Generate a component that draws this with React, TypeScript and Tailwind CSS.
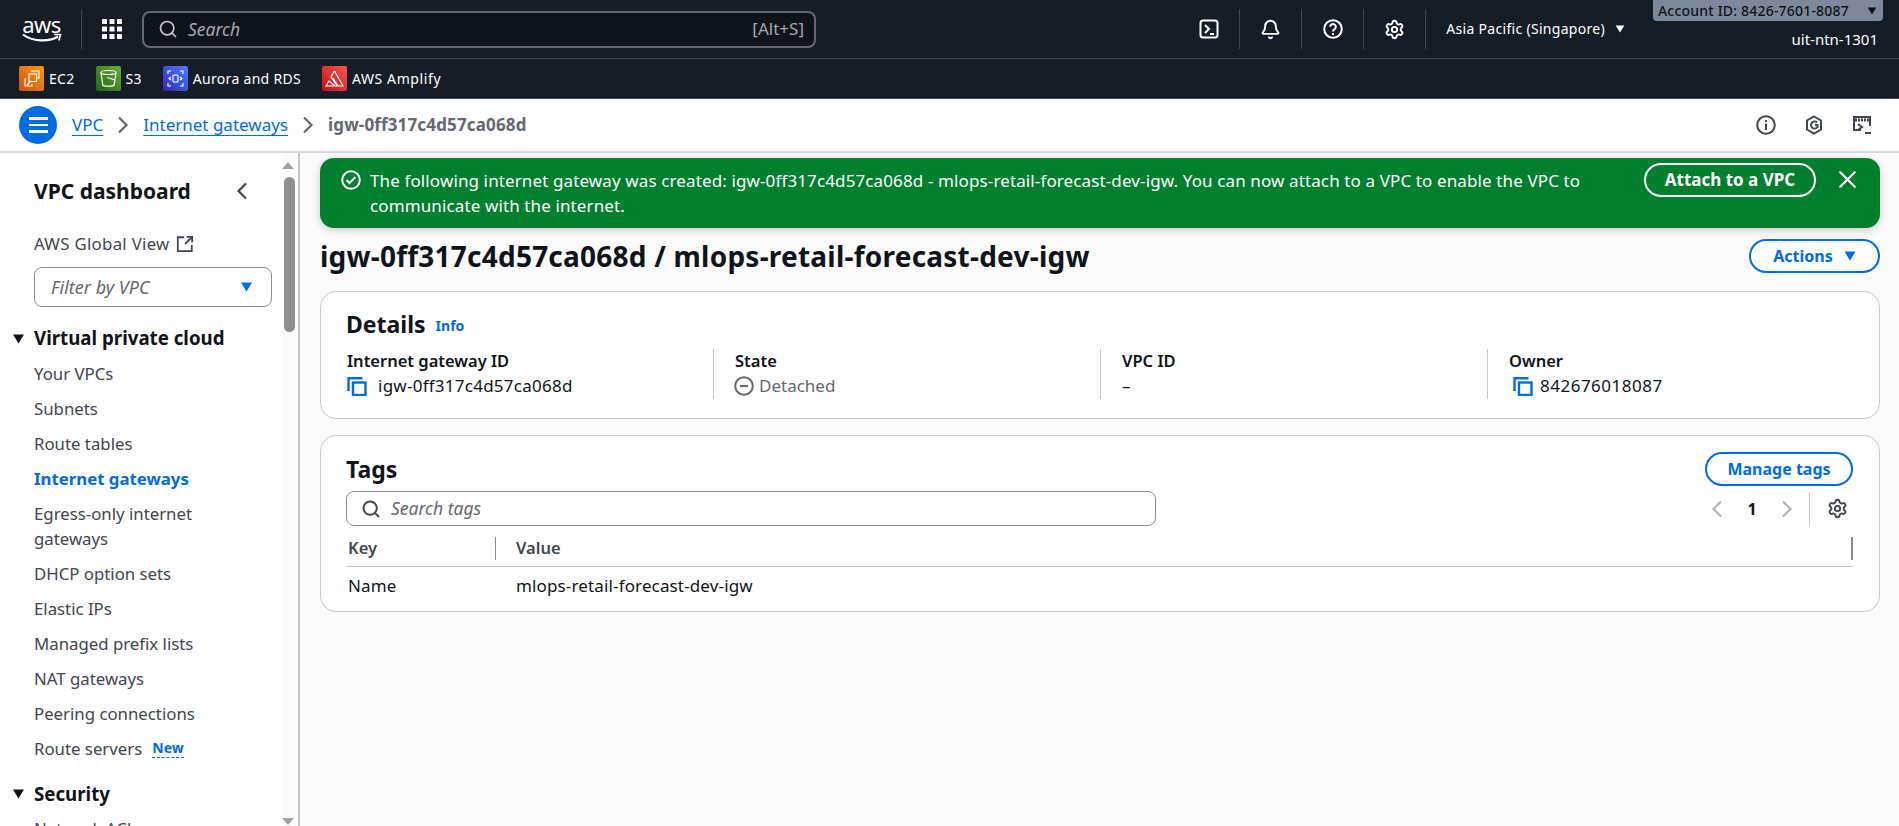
import React from 'react';
import { Bell, Search, Settings, X } from 'lucide-react';

const navItems = [
  { label: 'Your VPCs' },
  { label: 'Subnets' },
  { label: 'Route tables' },
  { label: 'Internet gateways', active: true },
  { label: 'Egress-only internet gateways' },
  { label: 'DHCP option sets' },
  { label: 'Elastic IPs' },
  { label: 'Managed prefix lists' },
  { label: 'NAT gateways' },
  { label: 'Peering connections' },
];

const Caret = ({ className }: { className: string }) => (
  <svg viewBox="0 0 12 10" className={className} fill="currentColor">
    <path d="M0.5 0.5h11L6 9.5z" />
  </svg>
);

const Chev = ({ left, className }: { left?: boolean; className: string }) => (
  <svg viewBox="0 0 12 18" className={`w-3 h-[18px] shrink-0 ${className}`} fill="none" stroke="currentColor" strokeWidth="2.2">
    <path d={left ? 'M10 1.5L2.5 9l7.5 7.5' : 'M2 1.5L9.5 9 2 16.5'} />
  </svg>
);

const CopyIcon = () => (
  <svg viewBox="0 0 20 20" className="w-5 h-5 text-[#006ce0] shrink-0" fill="none" stroke="currentColor" strokeWidth="2.4">
    <path d="M1.5 15V2.2h14" />
    <rect x="6" y="6.5" width="12.5" height="12.5" />
  </svg>
);

const Divider = () => <div className="w-px h-10 bg-[#424650]" />;

const ServiceLink = ({ label, from, to, wide, children }: { label: string; from: string; to: string; wide?: boolean; children: React.ReactNode }) => (
  <div className="flex items-center gap-[5px]">
    <div className={`w-[25px] h-[25px] rounded-[2px] bg-linear-to-tr ${from} ${to}`}>
      <svg viewBox="0 0 25 25" className="w-[25px] h-[25px]" fill="none" stroke="#fff" strokeWidth="1.1">
        {children}
      </svg>
    </div>
    <span className={`text-sm text-white ${wide ? 'tracking-[0.6px]' : 'tracking-[0.3px]'}`}>{label}</span>
  </div>
);

const TopBar = () => (
  <header className="h-[59px] shrink-0 bg-[#161d26] border-b border-[#424650] flex items-center relative">
    <div className="w-[81px] flex flex-col items-center pl-[2px] shrink-0">
      <span className="text-[22px] leading-[18px] text-white tracking-[-0.5px]">aws</span>
      <svg viewBox="0 0 40 10" className="w-10 h-[10px]" fill="none">
        <path d="M1 1.5C10 8.5 27 9.5 36 3.5" stroke="#fff" strokeWidth="2.2" />
        <path d="M32 1.5h6.5l-1.5 6" stroke="#fff" strokeWidth="1.6" />
      </svg>
    </div>
    <Divider />
    <svg viewBox="0 0 20 20" className="w-5 h-5 ml-5 shrink-0" fill="#fff">
      {[0, 7.5, 15].map((y) =>
        [0, 7.5, 15].map((x) => <rect key={`${x}-${y}`} x={x} y={y} width="5" height="5" rx="0.6" />),
      )}
    </svg>
    <div className="ml-5 w-[674px] h-[37px] shrink-0 rounded-lg border-2 border-[#656871] bg-[#0f141a] flex items-center pl-[14px] pr-[10px]">
      <Search className="w-[20px] h-[20px] text-[#c6c6cd]" strokeWidth={2} />
      <span className="ml-[10px] text-[17.5px] italic text-[#a4a7ae]">Search</span>
      <span className="ml-auto text-[17px] text-[#a4a7ae]">[Alt+S]</span>
    </div>
    <div className="ml-auto flex items-center h-10">
      <div className="w-[60px] flex justify-center">
        <svg viewBox="0 0 20 20" className="w-5 h-5" fill="none" stroke="#fff" strokeWidth="2">
          <rect x="1.5" y="1.5" width="17" height="17" rx="2.5" />
          <path d="M6 6l4 4-4 4M11 15h4" />
        </svg>
      </div>
      <div className="w-px h-10 bg-[#424650]" />
      <div className="w-[61px] flex justify-center">
        <Bell className="w-[21px] h-[21px] text-white" strokeWidth={2.2} />
      </div>
      <div className="w-px h-10 bg-[#424650]" />
      <div className="w-[61px] flex justify-center">
        <svg viewBox="0 0 20 20" className="w-5 h-5" fill="none" stroke="#fff" strokeWidth="2">
          <circle cx="10" cy="10" r="8.8" />
          <path d="M7.2 7.8a2.8 2.8 0 1 1 4.4 2.3c-1 .7-1.6 1.2-1.6 2.5" />
          <path d="M10 14.2v1.8" />
        </svg>
      </div>
      <div className="w-px h-10 bg-[#424650]" />
      <div className="w-[61px] flex justify-center">
        <Settings className="w-[21px] h-[21px] text-white" strokeWidth={2.2} />
      </div>
      <div className="w-px h-10 bg-[#424650]" />
      <span className="ml-5 text-sm tracking-[0.3px] text-white">Asia Pacific (Singapore)</span>
      <Caret className="w-[10px] h-2 ml-[10px] text-white" />
      <div className="w-[28px]" />
      <div className="w-[230px] flex flex-col items-end">
        <span className="text-[15px] text-white pr-[5px] mt-[21px]">uit-ntn-1301</span>
      </div>
      <div className="w-4" />
    </div>
    <div className="absolute top-0 right-4 w-[230px] h-[21px] rounded-b-[4px] bg-[#7d8998] flex items-center justify-between pl-[5px] pr-[6px]">
      <span className="text-sm font-medium tracking-[0.2px] text-[#0f141a] whitespace-nowrap">Account ID: 8426-7601-8087</span>
      <Caret className="w-[10px] h-2 text-[#0f141a]" />
    </div>
  </header>
);

const ServicesBar = () => (
  <div className="h-10 shrink-0 bg-[#161d26] border-b border-[#424650] flex items-center pl-[19px] gap-[21px]">
    <ServiceLink label="EC2" from="from-[#c8511b]" to="to-[#ff9900]">
      <rect x="10" y="8" width="7.5" height="7.5" />
      <path d="M13 6V5h7v7h-2M7 13H6v7h7v-2" />
      <path d="M8 19l3-3" />
    </ServiceLink>
    <ServiceLink label="S3" from="from-[#1b660f]" to="to-[#6cae3e]">
      <ellipse cx="12.5" cy="6.5" rx="7.5" ry="2" />
      <path d="M5 6.5l1.8 12.5c.5 1.5 10.9 1.5 11.4 0L20 6.5" />
      <path d="M11 11.5l8 2.5" />
    </ServiceLink>
    <ServiceLink label="Aurora and RDS" from="from-[#2e27ad]" to="to-[#527fff]">
      <rect x="10" y="9" width="5" height="7" rx="1" />
      <path d="M5 8V5h3M17 5h3v3M20 17v3h-3M8 20H5v-3M8 11l-2 1.5L8 14M17 11l2 1.5-2 1.5" />
    </ServiceLink>
    <ServiceLink label="AWS Amplify" from="from-[#bd0816]" to="to-[#ff5252]" wide>
      <path d="M12.5 5L21 20H4l3-5 6 5M12.5 5L9 11l6 9M16 20l-5-8" />
    </ServiceLink>
  </div>
);

const Breadcrumbs = () => (
  <div className="h-[54px] shrink-0 bg-white border-b-2 border-[#d5d6dc] flex items-center pl-[19px] pr-[27px]">
    <div className="w-[38px] h-[38px] rounded-full bg-[#006ce0] flex flex-col items-center justify-center gap-[4px]">
      <div className="w-[19px] h-[2.5px] bg-white" />
      <div className="w-[19px] h-[2.5px] bg-white" />
      <div className="w-[19px] h-[2.5px] bg-white" />
    </div>
    <a className="ml-[15px] text-[17px] text-[#006ce0] underline underline-offset-4">VPC</a>
    <Chev className="mx-[14px] text-[#656871]" />
    <a className="text-[17px] text-[#006ce0] underline underline-offset-4">Internet gateways</a>
    <Chev className="mx-[14px] text-[#656871]" />
    <span className="text-[17px] tracking-[0.15px] font-bold text-[#656871]">igw-0ff317c4d57ca068d</span>
    <div className="ml-auto flex items-center gap-[28px]">
      <svg viewBox="0 0 20 20" className="w-5 h-5" fill="none" stroke="#424650" strokeWidth="2">
        <circle cx="10" cy="10" r="8.8" />
        <path d="M10 8.5V15M10 5v2" />
      </svg>
      <svg viewBox="0 0 20 20" className="w-5 h-5" fill="none" stroke="#424650" strokeWidth="2">
        <path d="M10 1.5l7 4v9l-7 4-7-4v-9z" />
        <path d="M13 7.5a3.5 3.5 0 1 0 0 5M11 10h2.5v3" />
      </svg>
      <svg viewBox="0 0 20 20" className="w-5 h-5" fill="none" stroke="#424650" strokeWidth="2">
        <path d="M9 15H2V2h16v9" />
        <path d="M3 5h14" strokeWidth="3" strokeDasharray="2 1" />
        <path d="M6 9l4 3-4 3M13 18h6" />
      </svg>
    </div>
  </div>
);

const Sidebar = () => (
  <aside className="relative w-[300px] shrink-0 bg-white border-r-2 border-[#c6c6cd] overflow-hidden pl-[34px] pr-[26px] pt-[23px]">
    <div className="flex items-center justify-between pr-[24px] h-[30px]">
      <h2 className="text-[21px] leading-[30px] font-bold text-[#0f141a]">VPC dashboard</h2>
      <Chev left className="text-[#424650]" />
    </div>
    <div className="mt-[26px] h-6 flex items-center gap-[6px] text-[16.8px] tracking-[0.3px] text-[#424650]">
      <span>AWS Global View</span>
      <svg viewBox="0 0 20 20" className="w-[18px] h-[18px]" fill="none" stroke="#424650" strokeWidth="2">
        <path d="M9 2.5H2V18h15.5v-7M12 2h6v6M18 2l-8 8" />
      </svg>
    </div>
    <div className="mt-[11px] h-[40px] rounded-lg border border-[#8c8c94] flex items-center justify-between pl-4 pr-[18px]">
      <span className="text-[18px] italic text-[#656871]">Filter by VPC</span>
      <Caret className="w-[13px] h-[10px] text-[#006ce0]" />
    </div>
    <div className="relative mt-[17px] h-[28px] flex items-center">
      <Caret className="absolute -left-[22px] top-[10px] w-[13px] h-[10px] text-[#0f141a]" />
      <h3 className="text-[18.7px] font-bold text-[#0f141a]">Virtual private cloud</h3>
    </div>
    <ul className="mt-[9px] pr-[25px] flex flex-col gap-[10px]">
      {navItems.map((item) => (
        <li
          key={item.label}
          className={`text-[16.8px] leading-[25px] ${item.active ? 'font-bold text-[#006ce0]' : 'text-[#424650]'}`}
        >
          {item.label}
        </li>
      ))}
      <li className="text-[16.8px] leading-[25px] text-[#424650] flex items-center gap-[10px]">
        Route servers
        <span className="text-sm font-bold leading-[18px] text-[#006ce0] border-b border-dashed border-[#006ce0]">New</span>
      </li>
    </ul>
    <div className="relative mt-[19px] h-[28px] flex items-center">
      <Caret className="absolute -left-[22px] top-[9px] w-[13px] h-[10px] text-[#0f141a]" />
      <h3 className="text-[18.7px] font-bold text-[#0f141a]">Security</h3>
    </div>
    <div className="mt-[8px] text-[16.8px] leading-[25px] text-[#424650]">Network ACLs</div>

    {/* scrollbar */}
    <div className="absolute top-0 right-0 bottom-0 w-[15px] bg-[#fbfbfb]" />
    <div className="absolute top-[9px] right-[4px] border-x-[6px] border-x-transparent border-b-[7px] border-b-[#a3a3a3]" />
    <div className="absolute top-[24px] right-[3px] w-[11px] h-[155px] rounded-md bg-[#8f8f8f]" />
    <div className="absolute bottom-[1px] right-[4px] border-x-[6px] border-x-transparent border-t-[7px] border-t-[#a3a3a3]" />
  </aside>
);

const Banner = () => (
  <div className="h-[70px] rounded-[14px] bg-[#00802f] shadow-[0_2px_8px_rgba(0,0,0,0.2)] flex pl-[21px] pr-[18px] pt-[10px] text-white">
    <svg viewBox="0 0 20 20" className="w-[20px] h-[20px] mt-[2px] shrink-0" fill="none" stroke="#fff" strokeWidth="2">
      <circle cx="10" cy="10" r="8.8" />
      <path d="M5.5 10l3 3 6-6" />
    </svg>
    <p className="ml-[9px] w-[1225px] text-[17px] tracking-[0.12px] leading-[25px]">
      The following internet gateway was created: igw-0ff317c4d57ca068d - mlops-retail-forecast-dev-igw. You can now attach to a VPC to enable the VPC to communicate with the internet.
    </p>
    <div className="ml-auto flex items-start gap-[17px] -mt-[5px]">
      <div className="h-[34px] w-[172px] rounded-full border-2 border-white flex items-center justify-center text-[17px] font-bold">
        Attach to a VPC
      </div>
      <X className="w-[29px] h-[29px] mt-[2px]" strokeWidth={1.8} />
    </div>
  </div>
);

const DetailCol = ({ label, first, children }: { label: string; first?: boolean; children: React.ReactNode }) => (
  <div className={`h-[50px] pl-[21px] ${first ? '' : 'border-l border-[#c6c6cd]'}`}>
    <div className="text-[16.5px] leading-[24px] font-semibold text-[#0f141a]">{label}</div>
    <div className="flex items-center h-[25px] text-[17px] text-[#424650]">{children}</div>
  </div>
);

const Main = () => (
  <main className="flex-1 min-w-0 bg-[#fbfbfb] pl-5 pr-[19px] pt-[5px] overflow-hidden">
    <Banner />
    <div className="mt-[11px] h-[34px] flex items-center justify-between">
      <h1 className="text-[28px] tracking-[0.23px] leading-[34px] font-bold text-[#0f141a]">igw-0ff317c4d57ca068d / mlops-retail-forecast-dev-igw</h1>
      <div className="h-[34px] w-[131px] rounded-full border-2 border-[#006ce0] flex items-center justify-center gap-[11px] bg-white text-base font-bold text-[#006ce0]">
        Actions
        <Caret className="w-3 h-[10px]" />
      </div>
    </div>
    <section className="mt-[18px] h-[128px] rounded-[16px] border border-[#c6c6cd] bg-white px-[5px] pt-[15px]">
      <div className="pl-5 h-[34px] flex items-center gap-[10px]">
        <h2 className="text-[23px] font-bold text-[#0f141a]">Details</h2>
        <span className="text-sm font-bold text-[#006ce0] mt-1">Info</span>
      </div>
      <div className="mt-[8px] grid grid-cols-4">
        <DetailCol label="Internet gateway ID" first>
          <CopyIcon />
          <span className="ml-[11px] text-[#0f141a] tracking-[0.25px]">igw-0ff317c4d57ca068d</span>
        </DetailCol>
        <DetailCol label="State">
          <svg viewBox="0 0 20 20" className="w-5 h-5 -ml-px" fill="none" stroke="#656871" strokeWidth="2">
            <circle cx="10" cy="10" r="8.8" />
            <path d="M6 10h8" />
          </svg>
          <span className="ml-[5px] text-[#656871]">Detached</span>
        </DetailCol>
        <DetailCol label="VPC ID">
          <span className="text-[#0f141a]">–</span>
        </DetailCol>
        <DetailCol label="Owner">
          <div className="ml-[4px]"><CopyIcon /></div>
          <span className="ml-[7px] text-[#0f141a] tracking-[0.5px]">842676018087</span>
        </DetailCol>
      </div>
    </section>
    <section className="mt-[16px] h-[177px] rounded-[16px] border border-[#c6c6cd] bg-white pl-[25px] pr-[26px] pt-[15px]">
      <div className="flex items-center justify-between h-[34px] mt-px">
        <h2 className="text-[23px] font-bold text-[#0f141a]">Tags</h2>
        <div className="h-[34px] w-[148px] rounded-full border-2 border-[#006ce0] flex items-center justify-center text-base font-bold text-[#006ce0]">
          Manage tags
        </div>
      </div>
      <div className="mt-[5px] flex items-center h-[35px]">
        <div className="w-[810px] h-[35px] rounded-lg border border-[#8c8c94] flex items-center pl-[14px]">
          <Search className="w-[20px] h-[20px] text-[#424650]" strokeWidth={2.4} />
          <span className="ml-[10px] text-[17.5px] italic text-[#656871]">Search tags</span>
        </div>
        <Chev left className="ml-auto text-[#b4b4bb]" />
        <span className="w-[58px] text-center text-base font-bold text-[#0f141a]">1</span>
        <Chev className="text-[#b4b4bb]" />
        <div className="w-px h-[34px] bg-[#c6c6cd] ml-[16px]" />
        <Settings className="w-[21px] h-[21px] ml-[17px] mr-[5px] text-[#424650]" strokeWidth={2.2} />
      </div>
      <div className="mt-[11px] h-[30px] border-b border-[#c6c6cd] flex">
        <div className="w-[150px] h-[23px] pl-[2px] border-r border-[#8c8c94] text-[16.5px] leading-[22px] font-semibold text-[#424650]">Key</div>
        <div className="flex-1 h-[23px] pl-5 border-r-2 border-[#8c8c94] text-[16.5px] leading-[22px] font-semibold text-[#424650]">Value</div>
      </div>
      <div className="flex h-[38px] items-center text-[17px] tracking-[0.14px] text-[#0f141a]">
        <div className="w-[170px] pl-[2px]">Name</div>
        <div>mlops-retail-forecast-dev-igw</div>
      </div>
    </section>
  </main>
);

export default function App() {
  return (
    <div className="h-[826px] w-full flex flex-col overflow-hidden bg-white font-['Noto_Sans',sans-serif]">
      <TopBar />
      <ServicesBar />
      <Breadcrumbs />
      <div className="flex flex-1 min-h-0">
        <Sidebar />
        <Main />
      </div>
    </div>
  );
}
